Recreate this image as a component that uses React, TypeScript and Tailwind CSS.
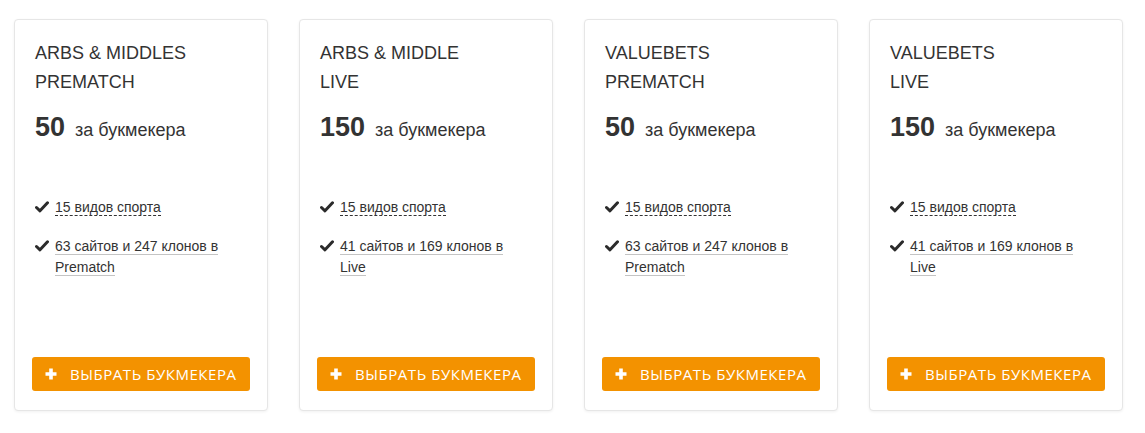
const plans = [
  { t1: 'ARBS & MIDDLES', t2: 'PREMATCH', price: '50', sites: '63 сайтов и 247 клонов в', mode: 'Prematch' },
  { t1: 'ARBS & MIDDLE', t2: 'LIVE', price: '150', sites: '41 сайтов и 169 клонов в', mode: 'Live' },
  { t1: 'VALUEBETS', t2: 'PREMATCH', price: '50', sites: '63 сайтов и 247 клонов в', mode: 'Prematch' },
  { t1: 'VALUEBETS', t2: 'LIVE', price: '150', sites: '41 сайтов и 169 клонов в', mode: 'Live' },
];

function Check() {
  return (
    <svg width="14" height="12" viewBox="0 0 14 12" className="shrink-0 mt-[4px]">
      <path d="M1.5 6.5 L5 9.8 L12.5 1.8" fill="none" stroke="#2b2b2b" strokeWidth="3" strokeLinecap="round" strokeLinejoin="round" />
    </svg>
  );
}

function Card({ p }: { p: (typeof plans)[number] }) {
  return (
    <div className="w-[254px] h-[392px] bg-white border border-[#e6e6e6] rounded-[4px] shadow-[0_1px_3px_rgba(0,0,0,0.06)] flex flex-col">
      <div className="px-[20px] pt-[19px] text-[#333]">
        <div className="text-[18px] leading-[29px]">
          <div>{p.t1}</div>
          <div>{p.t2}</div>
        </div>
        <div className="mt-[10px] flex items-baseline gap-[10px]">
          <span className="text-[27px] font-bold">{p.price}</span>
          <span className="text-[18px]">за букмекера</span>
        </div>
        <div className="mt-[49px] text-[14px] leading-[21px] flex flex-col gap-[18px]">
          <div className="flex gap-[6px]">
            <Check />
            <span>
              <span className="border-b border-dashed border-[#333]">15 видов спорта</span>
            </span>
          </div>
          <div className="flex gap-[6px]">
            <Check />
            <span className="w-[172px]">
              <span className="border-b border-[#c4c4c4]">{p.sites}</span>{' '}
              <span className="border-b border-[#c4c4c4]">{p.mode}</span>
            </span>
          </div>
        </div>
      </div>
      <div className="mt-auto px-[17px] pb-[19px]">
        <button className="w-[218px] h-[34px] bg-[#f39200] rounded-[3px] flex items-center pl-[13px] text-white">
          <svg width="12" height="12" viewBox="0 0 12 12" className="shrink-0">
            <path d="M6 0.5 V11.5 M0.5 6 H11.5" stroke="white" strokeWidth="3.6" />
          </svg>
          <span className="ml-[13px] text-[15px] tracking-[0.55px] font-['Open_Sans',sans-serif]">ВЫБРАТЬ БУКМЕКЕРА</span>
        </button>
      </div>
    </div>
  );
}

export default function App() {
  return (
    <div className="w-[1145px] h-[433px] bg-white font-['Liberation_Sans',Arial,sans-serif] pl-[14px] pt-[19px] flex gap-[31px]">
      {plans.map((p, i) => (
        <Card key={i} p={p} />
      ))}
    </div>
  );
}
